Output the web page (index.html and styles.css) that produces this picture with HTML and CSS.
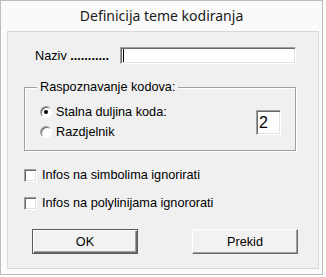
FILE: index.html
```html
<!DOCTYPE html>
<html lang="hr">
<head>
    <meta charset="UTF-8" />
    <meta name="viewport" content="width=device-width, initial-scale=1.0" />
    <title>Definicija teme kodiranja</title>
    <link rel="stylesheet" href="styles.css">
</head>
<body>
    <div class="window">
        <div class="title">Definicija teme kodiranja</div>
        <div class="panel">
            <!-- Naziv -->
            <div class="name-row">
                <label class="name-label">Naziv <b class="dots">...........</b></label>
                <div class="field name-field"><span class="caret"></span></div>
            </div>
            <!-- Raspoznavanje kodova -->
            <div class="group">
                <span class="legend">Raspoznavanje kodova:</span>
                <div class="group-body">
                    <div class="options">
                        <div class="option"><span class="radio checked"></span>Stalna duljina koda:</div>
                        <div class="option"><span class="radio"></span>Razdjelnik</div>
                    </div>
                    <div class="field len-field">2</div>
                </div>
            </div>
            <!-- Checkboxes -->
            <div class="check first"><span class="box"></span>Infos na simbolima ignorirati</div>
            <div class="check"><span class="box"></span>Infos na polylinijama ignororati</div>
            <!-- Buttons -->
            <div class="btns">
                <button type="button" class="btn default">OK</button>
                <button type="button" class="btn">Prekid</button>
            </div>
        </div>
    </div>
</body>
</html>
```

FILE: styles.css
```css
body {
    margin: 0;
    background: #ffffff;
    font-family: "Liberation Sans", Arial, sans-serif;
    font-size: 12.7px;
    color: #000;
}
.window {
    width: 323px;
    height: 275px;
    box-sizing: border-box;
    border: 1px solid #bcbcbc;
    background: #fafafa;
    display: flex;
    flex-direction: column;
}
.title {
    height: 30px;
    line-height: 30px;
    text-align: center;
    font-family: "Noto Sans", sans-serif;
    font-size: 14px;
    color: #1a1a1a;
}
.panel {
    margin-left: 6px;
    width: 312px;
    height: 238px;
    box-sizing: border-box;
    border: 1px solid #d9d9d9;
    background: #f0f0f0;
    display: flex;
    flex-direction: column;
    padding-left: 16px;
}
.name-row {
    display: flex;
    align-items: center;
    margin-top: 15px;
    height: 17px;
}
.name-label {
    width: 85px;
    padding-left: 11px;
    white-space: nowrap;
}
.dots {
    font-weight: bold;
}
.field {
    box-sizing: border-box;
    background: #fff;
    border: 1px solid;
    border-color: #a0a0a0 #fff #fff #a0a0a0;
    box-shadow: inset 1px 1px 0 #696969, inset -1px -1px 0 #e3e3e3;
}
.name-field {
    width: 176px;
    height: 17px;
    display: flex;
    align-items: center;
    padding-left: 2px;
}
.caret {
    width: 1px;
    height: 13px;
    background: #000;
}
.group {
    margin-top: 23px;
    width: 272px;
    height: 64px;
    box-sizing: border-box;
    border: 1px solid #a0a0a0;
    box-shadow: inset 1px 1px 0 #fff, 1px 1px 0 #fff;
    display: flex;
    flex-direction: column;
}
.legend {
    align-self: flex-start;
    margin: -8px 0 0 12px;
    padding: 0 3px;
    line-height: 14px;
    background: #f0f0f0;
}
.group-body {
    display: flex;
    align-items: center;
    justify-content: space-between;
    margin-top: 11px;
    padding: 0 14px 0 15px;
}
.options {
    display: flex;
    flex-direction: column;
    gap: 6px;
}
.option, .check {
    display: flex;
    align-items: center;
    height: 14px;
}
.radio {
    position: relative;
    width: 12px;
    height: 12px;
    box-sizing: border-box;
    margin-right: 4px;
    border-radius: 50%;
    border: 1px solid;
    border-color: #a0a0a0 #fff #fff #a0a0a0;
    box-shadow: inset 1px 1px 0 #696969;
    background: #fff;
}
.radio.checked::after {
    content: "";
    position: absolute;
    left: 3px;
    top: 3px;
    width: 4px;
    height: 4px;
    border-radius: 50%;
    background: #000;
}
.len-field {
    width: 25px;
    height: 25px;
    font-size: 16px;
    line-height: 23px;
    padding-left: 2px;
}
.check {
    margin-top: 14px;
}
.check.first {
    margin-top: 17px;
}
.box {
    width: 13px;
    height: 13px;
    box-sizing: border-box;
    margin-right: 5px;
    background: #fff;
    border: 1px solid;
    border-color: #a0a0a0 #fff #fff #a0a0a0;
    box-shadow: inset 1px 1px 0 #696969, inset -1px -1px 0 #e3e3e3;
}
.btns {
    display: flex;
    gap: 54px;
    margin-top: 19px;
    padding-left: 8px;
}
.btn {
    width: 106px;
    height: 25px;
    padding: 0;
    font: inherit;
    color: #000;
    background: #f2f2f2;
    border: 1px solid;
    border-color: #fff #696969 #696969 #fff;
    box-shadow: inset -1px -1px 0 #a0a0a0;
}
.btn.default {
    border: 1px solid #5a5a5a;
    box-shadow: inset 1px 1px 0 #fff, inset -1px -1px 0 #696969, inset -2px -2px 0 #a0a0a0;
}
```
